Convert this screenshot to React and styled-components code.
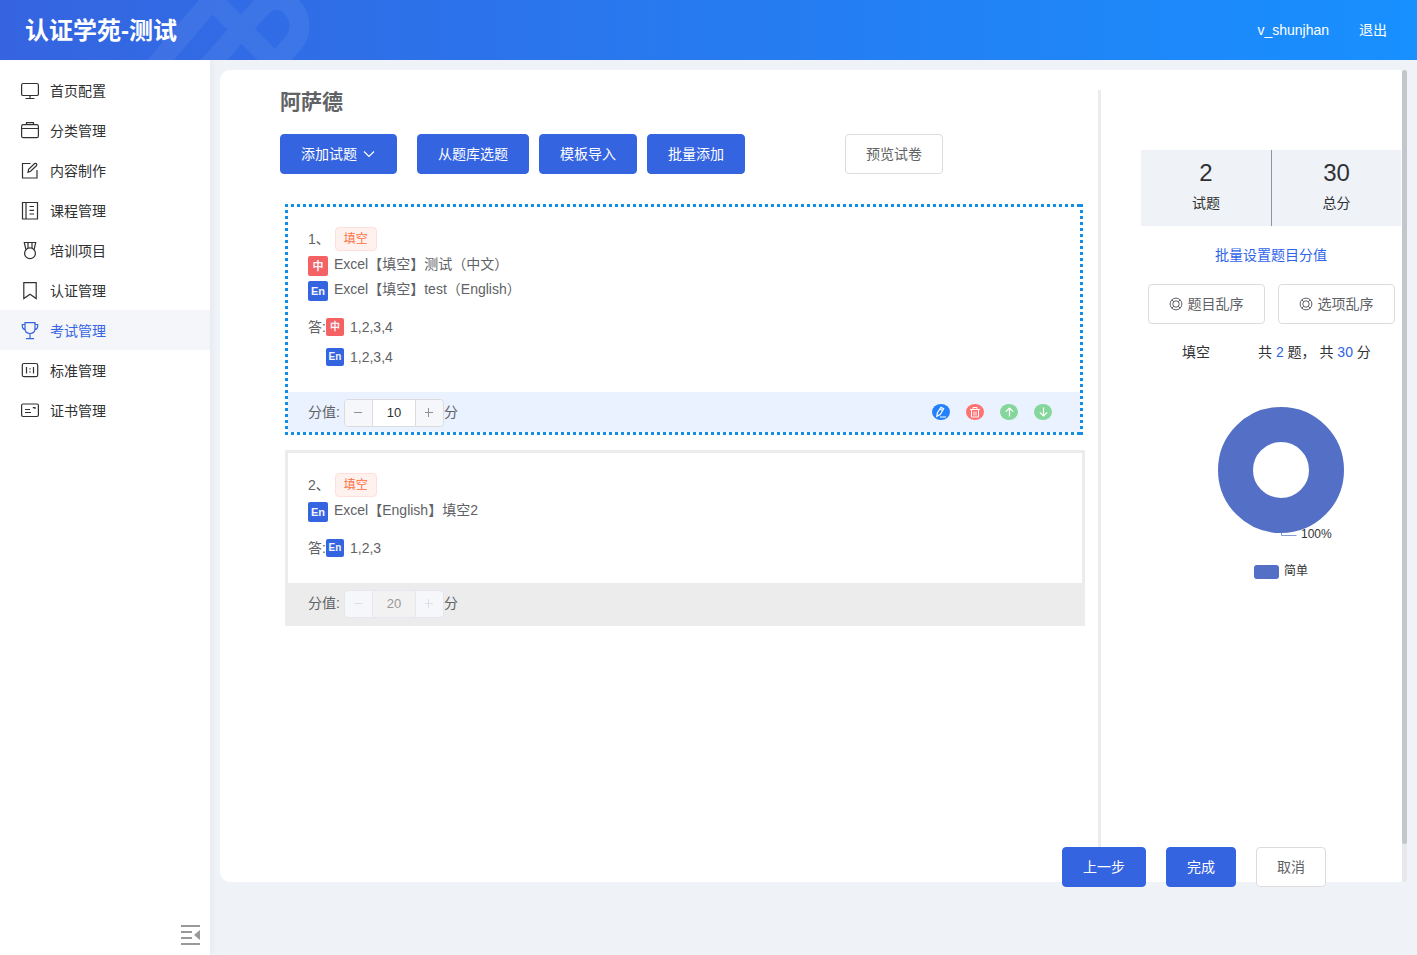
import { useState } from "react";
import styled, { createGlobalStyle, css } from "styled-components";

const GlobalStyle = createGlobalStyle`
  :root {
    --color-primary: #3564e1;
    --color-link: #2f63e8;
    --color-page: #eff3f8;
    --color-text: #303133;
    --color-muted: #606266;
    --color-line: #ececec;
    --color-red: #f56264;
  }

  *, *::before, *::after {
    box-sizing: border-box;
  }

  body {
    margin: 0;
    background: var(--color-page);
    color: var(--color-text);
    font-family: "Liberation Sans", "Noto Sans CJK SC", sans-serif;
    font-size: 14px;
    line-height: 20px;
  }

  button, input {
    font: inherit;
  }
`;

const Page = styled.div`
  display: flex;
  flex-direction: column;
  min-height: 100vh;
`;

const Header = styled.header`
  position: relative;
  display: flex;
  align-items: center;
  justify-content: space-between;
  height: 60px;
  padding: 0 30px 0 25px;
  background: linear-gradient(90deg, #3664e0, #1890ff);
  color: #fff;
`;

const HeaderMark = styled.svg`
  position: absolute;
  top: 0;
  left: 140px;
  fill: none;
  stroke: #fff;
  opacity: 0.06;
`;

const Brand = styled.h1`
  position: relative;
  margin: 0;
  padding-top: 2px;
  font-size: 24px;
  line-height: 30px;
`;

const HeaderNav = styled.nav`
  display: flex;
  gap: 30px;
`;

const HeaderLink = styled.a`
  color: #fff;
  text-decoration: none;
`;

const Body = styled.div`
  display: flex;
  flex: 1;
`;

const Sidebar = styled.aside`
  display: flex;
  flex-direction: column;
  justify-content: space-between;
  flex: 0 0 210px;
  padding: 10px 0;
  background: #fff;
  box-shadow: 2px 0 6px rgba(0, 21, 41, 0.04);
`;

const MenuItem = styled.a`
  display: flex;
  align-items: center;
  gap: 10px;
  height: 40px;
  padding: 2px 20px 0;
  color: ${(props) => (props.$active ? "var(--color-primary)" : "#303133")};
  background: ${(props) => (props.$active ? "#f5f6f9" : "transparent")};
  text-decoration: none;
`;

const MenuIcon = styled.svg`
  flex: none;
  width: 20px;
  height: 20px;
  fill: none;
  stroke: currentColor;
  stroke-width: 1.2;
`;

const CollapseButton = styled.button`
  align-self: flex-end;
  display: flex;
  margin-right: 10px;
  padding: 0;
  border: 0;
  background: none;
  color: #999;
`;

const Main = styled.main`
  display: flex;
  flex-direction: column;
  flex: 1;
  min-width: 0;
  padding: 10px 10px 68px;
`;

const Panel = styled.div`
  display: flex;
  flex: 1;
`;

const Card = styled.section`
  display: flex;
  flex: 1;
  min-width: 0;
  padding-top: 20px;
  border-radius: 10px 2px 2px 10px;
  background: #fff;
`;

const ScrollTrack = styled.div`
  width: 5px;
  border-radius: 3px;
  background: #e6e8ec;
`;

const ScrollThumb = styled.div`
  height: 95.3%;
  border-radius: 3px;
  background: #c3c6cb;
`;

const Editor = styled.div`
  flex: 1;
  min-width: 0;
  padding: 0 13px 20px 60px;
`;

const Title = styled.h2`
  margin: 0 0 20px;
  color: #606266;
  font-size: 21px;
  line-height: 24px;
`;

const Toolbar = styled.div`
  display: flex;
  gap: 10px;
`;

const Button = styled.button`
  display: inline-flex;
  align-items: center;
  justify-content: center;
  gap: 5px;
  height: 40px;
  padding: 0 20px;
  border: 1px solid #dcdcdc;
  border-radius: 4px;
  background: #fff;
  color: var(--color-muted);
  white-space: nowrap;

  ${(props) =>
    props.$primary &&
    css`
      border-color: var(--color-primary);
      background: var(--color-primary);
      color: #fff;
    `}
`;

const AddButton = styled(Button)`
  margin-right: 10px;
`;

const PreviewButton = styled(Button)`
  margin-left: 90px;
`;

const QuestionList = styled.div`
  display: flex;
  flex-direction: column;
  gap: 15px;
  margin: 30px 0 0 5px;
`;

const dots = "#108ee9 0 3px, transparent 3px 6px";

const Question = styled.article`
  padding: 3px;
  color: var(--color-muted);

  ${(props) =>
    props.$active
      ? css`
          margin-right: 2px;
          background:
            repeating-linear-gradient(90deg, ${dots}) top / 100% 3px no-repeat,
            repeating-linear-gradient(90deg, ${dots}) bottom / 100% 3px no-repeat,
            repeating-linear-gradient(180deg, ${dots}) left / 3px 100% no-repeat,
            repeating-linear-gradient(0deg, ${dots}) right / 3px 100% no-repeat;
        `
      : css`
          background: var(--color-line);
        `}
`;

const QuestionBody = styled.div`
  padding: 20px;
  background: #fff;
`;

const QuestionLine = styled.div`
  display: flex;
  gap: ${(props) => (props.$head ? "5px" : "6px")};
  height: 25px;
  line-height: 25px;
`;

const Tag = styled.span`
  height: 24px;
  padding: 0 8px;
  border: 1px solid #ffe0da;
  border-radius: 4px;
  background: #fff1ee;
  color: #ff7043;
  font-size: 12px;
  line-height: 22px;
`;

const Lang = styled.span`
  flex: none;
  display: inline-flex;
  align-items: center;
  justify-content: center;
  width: ${(props) => (props.$small ? "18px" : "20px")};
  height: ${(props) => (props.$small ? "18px" : "20px")};
  margin-top: ${(props) => (props.$small ? "0" : "4px")};
  border-radius: 2px;
  background: ${(props) =>
    props.$zh ? "var(--color-red)" : "var(--color-primary)"};
  color: #f3f5fc;
  font-size: ${(props) => (props.$small ? "10px" : "11px")};
  font-weight: 700;
  line-height: 18px;
`;

const Answers = styled.div`
  display: grid;
  grid-template-columns: 18px 1fr;
  margin-top: 10px;
  line-height: 30px;
`;

const Answer = styled.div`
  grid-column: 2;
  display: flex;
  align-items: center;
  gap: 6px;
`;

const QuestionFooter = styled.div`
  display: flex;
  align-items: center;
  justify-content: space-between;
  height: 40px;
  padding: 0 28px 0 20px;
  background: ${(props) => (props.$active ? "#eaf1ff" : "var(--color-line)")};
`;

const Score = styled.label`
  display: flex;
  align-items: center;
`;

const Stepper = styled.span`
  display: flex;
  width: 100px;
  height: 28px;
  margin: 2px 0 0 4px;
  overflow: hidden;
  border: 1px solid ${(props) => (props.$disabled ? "#e4e7ed" : "#dcdcdc")};
  border-radius: 4px;
`;

const StepButton = styled.button`
  flex: none;
  display: flex;
  align-items: center;
  justify-content: center;
  width: 27px;
  padding: 0;
  border: 0;
  background: #f5f7fa;
  color: #8f9196;

  &:disabled {
    color: #dcdfe6;
  }
`;

const StepInput = styled.input`
  flex: 1;
  min-width: 0;
  padding: 0;
  border: solid #dcdcdc;
  border-width: 0 1px;
  background: #fff;
  color: #303133;
  font-size: 13px;
  text-align: center;

  &:disabled {
    border-color: #e4e7ed;
    background: #f2f2f2;
    color: #999;
  }
`;

const Actions = styled.div`
  display: flex;
  gap: 16px;
`;

const ActionButton = styled.button`
  display: flex;
  align-items: center;
  justify-content: center;
  width: 18px;
  height: 16px;
  padding: 0;
  border: 0;
  border-radius: 50%;
  background: ${(props) => props.$color};
  color: #fff;
`;

const LineIcon = styled.svg`
  flex: none;
  fill: none;
  stroke: currentColor;
`;

const Summary = styled.aside`
  flex: 0 0 304px;
  padding: 60px 1px 0 40px;
  border-left: 3px solid var(--color-line);
  text-align: center;
`;

const Stats = styled.div`
  display: grid;
  grid-template-columns: 131px 1fr;
  background: var(--color-page);
`;

const Stat = styled.div`
  padding: 8px 0;
  line-height: 30px;

  &:first-child {
    border-right: 1px solid #909399;
  }
`;

const StatValue = styled.div`
  font-size: 24px;
`;

const BatchLink = styled.a`
  display: block;
  margin: 19px 0;
  color: var(--color-link);
  text-decoration: none;
`;

const ShuffleRow = styled.div`
  display: flex;
  justify-content: center;
  gap: 13px;
`;

const TypeRow = styled.div`
  display: flex;
  gap: 48px;
  margin-top: 18px;
  padding-left: 41px;

  b {
    color: var(--color-link);
    font-weight: 400;
  }
`;

const Chart = styled.svg`
  display: block;
  font-size: 12px;
`;

const FormActions = styled.footer`
  position: relative;
  display: flex;
  justify-content: flex-end;
  gap: 20px;
  margin-top: -35px;
  padding-right: 81px;
`;

const menu = [
  {
    name: "首页配置",
    icon: (
      <>
        <rect x="1.6" y="2.5" width="16.8" height="12" rx="1.6" />
        <path d="M10 14.500v3M5.500 17.500h9" />
      </>
    ),
  },
  {
    name: "分类管理",
    icon: (
      <>
        <rect x="1.6" y="3.7" width="16.8" height="13" rx="1.8" />
        <path d="M6.500 3.500V1.600h7V3.500M2 7.500h16" />
      </>
    ),
  },
  {
    name: "内容制作",
    icon: (
      <path d="M10.500 2.500h-8v14.500h14.500V9M8 11.300l.6-3 6-5.700c1.500-.9 2.800.7 2 1.900l-6 5.800z" />
    ),
  },
  {
    name: "课程管理",
    icon: (
      <path d="M2.500 1.500h15v16.500h-15zM6 1.500V18M9.500 5.500h4.500M9.500 9.300h4.500M9.500 13h4.500" />
    ),
  },
  {
    name: "培训项目",
    icon: (
      <>
        <circle cx="10" cy="12.3" r="5.4" />
        <path d="M5.900 8.700 4.300 1.500h11.400l-1.600 7.200M8 7V1.500M12 7V1.500" />
      </>
    ),
  },
  { name: "认证管理", icon: <path d="M3.800 1.600h12.400v15.900L10 13.200l-6.200 4.300z" /> },
  {
    name: "考试管理",
    active: true,
    icon: (
      <path d="M5 1.600h10v5.900c0 3.200-2 5-5 5s-5-1.800-5-5zM5 3.500H2.300v1c0 2.700 1 4 3.200 4.300M15 3.500h2.700v1c0 2.700-1 4-3.200 4.300M10 12.500v5M6 17.700h8" />
    ),
  },
  {
    name: "标准管理",
    icon: (
      <>
        <rect x="2.3" y="2.5" width="15.4" height="13.2" rx="1.8" />
        <path d="M6.500 6v6.500M13.500 6v6.500M10 7.200v1.400M10 10.200v1.400" />
      </>
    ),
  },
  {
    name: "证书管理",
    icon: (
      <>
        <rect x="1.6" y="3" width="16.8" height="12.5" rx="1.4" />
        <path d="M5 8.500h5M5 11.500h6M12.800 6.700h2.200v1.400" />
      </>
    ),
  },
];

const questions = [
  {
    id: 1,
    active: true,
    score: 10,
    lines: [
      { lang: "中", text: "Excel【填空】测试（中文）" },
      { lang: "En", text: "Excel【填空】test（English）" },
    ],
    answers: [
      { lang: "中", text: "1,2,3,4" },
      { lang: "En", text: "1,2,3,4" },
    ],
  },
  {
    id: 2,
    active: false,
    score: 20,
    lines: [{ lang: "En", text: "Excel【English】填空2" }],
    answers: [{ lang: "En", text: "1,2,3" }],
  },
];

function ScoreStepper({ id, score, disabled }) {
  const [value, setValue] = useState(score);

  return (
    <Stepper $disabled={disabled}>
      <StepButton
        disabled={disabled}
        aria-label="-"
        onClick={() => setValue(Number(value) - 1)}
      >
        <LineIcon width="10" height="10">
          <path d="M1 4.500h8" />
        </LineIcon>
      </StepButton>
      <StepInput
        id={id}
        value={value}
        disabled={disabled}
        onChange={(e) => setValue(e.target.value)}
      />
      <StepButton
        disabled={disabled}
        aria-label="+"
        onClick={() => setValue(Number(value) + 1)}
      >
        <LineIcon width="10" height="10">
          <path d="M1 4.500h8M4.500 0v9" />
        </LineIcon>
      </StepButton>
    </Stepper>
  );
}

function QuestionActions() {
  return (
    <Actions>
      <ActionButton $color="#2381fa" aria-label="编辑">
        <LineIcon width="12" height="12" strokeWidth="1.2">
          <path d="M1.800 10.300l.6-3.500L6 1.200l2.700 1.600L5.200 8.500zM4.900 3l2.600 1.600M5 11h6" />
        </LineIcon>
      </ActionButton>
      <ActionButton $color="#ff7272" aria-label="删除">
        <LineIcon width="12" height="12">
          <path d="M1 3.500h10M4 3.500v-2h4v2M2.500 3.500v7.500h7V3.500M5 5.500v4M7 5.500v4" />
        </LineIcon>
      </ActionButton>
      <ActionButton $color="#85d69b" aria-label="上移">
        <LineIcon width="12" height="12" strokeWidth="1.2">
          <path d="M6.500 10.500V2M2.800 5.700l3.700-3.700 3.700 3.700" />
        </LineIcon>
      </ActionButton>
      <ActionButton $color="#85d69b" aria-label="下移">
        <LineIcon width="12" height="12" strokeWidth="1.2">
          <path d="M6.500 1.500V10M2.800 6.300l3.700 3.700 3.700-3.700" />
        </LineIcon>
      </ActionButton>
    </Actions>
  );
}

function QuestionCard({ question }) {
  const { id, active, score, lines, answers } = question;

  return (
    <Question $active={active}>
      <QuestionBody>
        <QuestionLine $head>
          <span>{id}、</span>
          <Tag>填空</Tag>
        </QuestionLine>
        {lines.map((line) => (
          <QuestionLine key={line.lang}>
            <Lang $zh={line.lang === "中"}>{line.lang}</Lang>
            <span>{line.text}</span>
          </QuestionLine>
        ))}
        <Answers>
          <span>答:</span>
          {answers.map((answer) => (
            <Answer key={answer.lang}>
              <Lang $small $zh={answer.lang === "中"}>
                {answer.lang}
              </Lang>
              {answer.text}
            </Answer>
          ))}
        </Answers>
      </QuestionBody>
      <QuestionFooter $active={active}>
        <Score htmlFor={`score-${id}`}>
          分值:
          <ScoreStepper id={`score-${id}`} score={score} disabled={!active} />
          分
        </Score>
        {active && <QuestionActions />}
      </QuestionFooter>
    </Question>
  );
}

function ShuffleButton({ children }) {
  return (
    <Button>
      <LineIcon width="14" height="14">
        <circle cx="7" cy="7" r="5.900" />
        <circle cx="7" cy="7" r="3.200" />
        <path d="M2.800 2.800l2 2M11.200 2.800l-2 2M2.800 11.200l2-2M11.200 11.200l-2-2" />
      </LineIcon>
      {children}
    </Button>
  );
}

function DifficultyChart() {
  return (
    <Chart width="260" height="228">
      <circle
        cx="140"
        cy="108"
        r="45.5"
        fill="none"
        stroke="#5470c6"
        strokeWidth="35"
      />
      <path d="M140.500 171v2.500h15" fill="none" stroke="#5470c6" opacity="0.7" />
      <text x="160" y="176" fill="#333">
        100%
      </text>
      <rect x="113" y="203" width="25" height="14" rx="3" fill="#5470c6" />
      <text x="143" y="213" fill="#333">
        简单
      </text>
    </Chart>
  );
}

function App() {
  return (
    <>
      <GlobalStyle />
      <Page>
        <Header>
          <HeaderMark width="180" height="60">
            <path
              d="M12 70 72 0 142 70M65 70 122 6C142-14 172 18 154 42L130 70"
              strokeWidth="20"
            />
          </HeaderMark>
          <Brand>认证学苑-测试</Brand>
          <HeaderNav>
            <HeaderLink href="#user">v_shunjhan</HeaderLink>
            <HeaderLink href="#logout">退出</HeaderLink>
          </HeaderNav>
        </Header>
        <Body>
          <Sidebar>
            <nav>
              {menu.map((item) => (
                <MenuItem key={item.name} href="#menu" $active={item.active}>
                  <MenuIcon>{item.icon}</MenuIcon>
                  {item.name}
                </MenuItem>
              ))}
            </nav>
            <CollapseButton aria-label="收起">
              <svg width="20" height="20" fill="currentColor">
                <path d="M1 0h19v2H1zM1 6h11v2H1zM1 12h11v2H1zM1 18h19v2H1zM20 5v10l-6-5z" />
              </svg>
            </CollapseButton>
          </Sidebar>
          <Main>
            <Panel>
              <Card>
                <Editor>
                  <Title>阿萨德</Title>
                  <Toolbar>
                    <AddButton $primary>
                      添加试题
                      <LineIcon width="14" height="14" strokeWidth="1.2">
                        <path d="M2 4.500l5 5 5-5" />
                      </LineIcon>
                    </AddButton>
                    <Button $primary>从题库选题</Button>
                    <Button $primary>模板导入</Button>
                    <Button $primary>批量添加</Button>
                    <PreviewButton>预览试卷</PreviewButton>
                  </Toolbar>
                  <QuestionList>
                    {questions.map((question) => (
                      <QuestionCard key={question.id} question={question} />
                    ))}
                  </QuestionList>
                </Editor>
                <Summary>
                  <Stats>
                    <Stat>
                      <StatValue>2</StatValue>
                      试题
                    </Stat>
                    <Stat>
                      <StatValue>30</StatValue>
                      总分
                    </Stat>
                  </Stats>
                  <BatchLink href="#batch">批量设置题目分值</BatchLink>
                  <ShuffleRow>
                    <ShuffleButton>题目乱序</ShuffleButton>
                    <ShuffleButton>选项乱序</ShuffleButton>
                  </ShuffleRow>
                  <TypeRow>
                    <span>填空</span>
                    <span>
                      共 <b>2</b> 题， 共 <b>30</b> 分
                    </span>
                  </TypeRow>
                  <DifficultyChart />
                </Summary>
              </Card>
              <ScrollTrack>
                <ScrollThumb />
              </ScrollTrack>
            </Panel>
            <FormActions>
              <Button $primary>上一步</Button>
              <Button $primary>完成</Button>
              <Button>取消</Button>
            </FormActions>
          </Main>
        </Body>
      </Page>
    </>
  );
}

export default App;
